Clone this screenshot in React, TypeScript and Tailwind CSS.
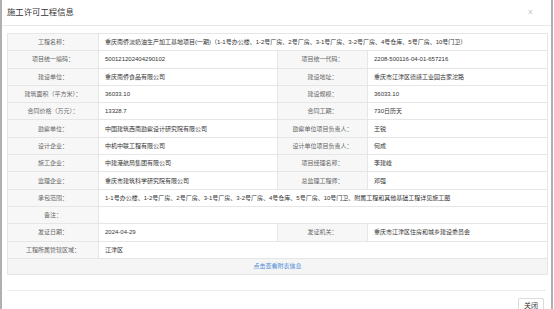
const font = "font-['Liberation_Sans','Noto_Sans_CJK_SC',sans-serif]";

type Row = { l1: string; v1: string; l2?: string; v2?: string; h?: string };

const rows: Row[] = [
  { l1: "工程名称：", v1: "重庆南侨淡奶油生产加工基地项目(一期)（1-1号办公楼、1-2号厂房、2号厂房、3-1号厂房、3-2号厂房、4号仓库、5号厂房、10号门卫）" },
  { l1: "项目统一编码：", v1: "500121202404290102", l2: "项目统一代码：", v2: "2208-500116-04-01-657216" },
  { l1: "建设单位：", v1: "重庆南侨食品有限公司", l2: "建设地址：", v2: "重庆市江津区德感工业园古家沱路" },
  { l1: "建筑面积（平方米）：", v1: "36033.10", l2: "建设规模：", v2: "36033.10" },
  { l1: "合同价格（万元）：", v1: "13328.7", l2: "合同工期：", v2: "730日历天" },
  { l1: "勘察单位：", v1: "中国建筑西南勘察设计研究院有限公司", l2: "勘察单位项目负责人：", v2: "王锐" },
  { l1: "设计企业：", v1: "中机中联工程有限公司", l2: "设计单位项目负责人：", v2: "何成" },
  { l1: "施工企业：", v1: "中建港航局集团有限公司", l2: "项目经理名称：", v2: "李建峰" },
  { l1: "监理企业：", v1: "重庆市建筑科学研究院有限公司", l2: "总监理工程师：", v2: "邓强" },
  { l1: "承包范围：", v1: "1-1号办公楼、1-2号厂房、2号厂房、3-1号厂房、3-2号厂房、4号仓库、5号厂房、10号门卫、附属工程和其他基础工程详见施工图" },
  { l1: "备注：", v1: "" },
  { l1: "发证日期：", v1: "2024-04-29", l2: "发证机关：", v2: "重庆市江津区住房和城乡建设委员会" },
  { l1: "工程所属管辖区域：", v1: "江津区" },
];

const label = "border border-[#e6e6e6] bg-[#f7f7f7] text-center text-[#666] p-0";
const value = "border border-[#e6e6e6] bg-white text-left text-[#333] pl-[6px] pr-0 py-0";

export default function App() {
  return (
    <div className={`w-[554px] h-[309px] overflow-hidden bg-white ${font}`}>
      <div className="h-full border-l-2 border-r-2 border-[#b0b0b0] mr-[1px] flex flex-col">
        <div className="h-[26px] shrink-0 flex items-center justify-between pl-[5px] pr-[18px] border-b border-[#e8e8e8]">
          <span className="text-[8.4px] leading-none text-[#333]">施工许可工程信息</span>
          <span className="text-[9px] leading-none text-[#c4c4c4]">×</span>
        </div>
        <div className="pt-[7px] pl-[5px] pr-[4px]">
          <table className="w-[540px] border-collapse table-fixed text-[6px] leading-none">
            <colgroup>
              <col className="w-[91px]" />
              <col className="w-[179px]" />
              <col className="w-[90px]" />
              <col className="w-[180px]" />
            </colgroup>
            <tbody>
              {rows.map((r) => (
                <tr key={r.l1} className="h-[17.3px]">
                  <td className={label}>{r.l1}</td>
                  {r.l2 ? (
                    <>
                      <td className={value}>{r.v1}</td>
                      <td className={label}>{r.l2}</td>
                      <td className={value}>{r.v2}</td>
                    </>
                  ) : (
                    <td className={value} colSpan={3}>{r.v1}</td>
                  )}
                </tr>
              ))}
              <tr className="h-[16px]">
                <td colSpan={4} className="border border-[#e6e6e6] bg-[#f5f5f5] text-center text-[#4a8ad4] p-0">
                  点击查看附表信息
                </td>
              </tr>
            </tbody>
          </table>
        </div>
        <div className="mt-[15px] mx-[5px] border-t border-[#ececec] flex justify-end pt-[7px] pr-[2px]">
          <button className="h-[15px] px-[5px] border border-[#dcdcdc] bg-white text-[7px] leading-none text-[#333] rounded-[1px]">
            关闭
          </button>
        </div>
      </div>
    </div>
  );
}
